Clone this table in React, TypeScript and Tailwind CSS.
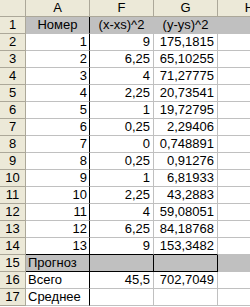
const cols = ["A", "F", "G", "H"];

type Row = { a: string; f?: string; g?: string; left?: boolean };

const rows: Row[] = [
  { a: "1", f: "9", g: "175,1815" },
  { a: "2", f: "6,25", g: "65,10255" },
  { a: "3", f: "4", g: "71,27775" },
  { a: "4", f: "2,25", g: "20,73541" },
  { a: "5", f: "1", g: "19,72795" },
  { a: "6", f: "0,25", g: "2,29406" },
  { a: "7", f: "0", g: "0,748891" },
  { a: "8", f: "0,25", g: "0,91276" },
  { a: "9", f: "1", g: "6,81933" },
  { a: "10", f: "2,25", g: "43,2883" },
  { a: "11", f: "4", g: "59,08051" },
  { a: "12", f: "6,25", g: "84,18768" },
  { a: "13", f: "9", g: "153,3482" },
];

function Cell({
  children,
  className = "",
}: {
  children?: React.ReactNode;
  className?: string;
}) {
  return (
    <div className={`h-[17px] border-b border-r border-[#c0c0c0] leading-[16px] overflow-hidden whitespace-nowrap ${className}`}>
      {children}
    </div>
  );
}

function RowHead({ n }: { n: number }) {
  return (
    <div className="h-[17px] border-b border-r border-[#aca899] bg-[#ece9d8] text-center leading-[16px]">
      {n}
    </div>
  );
}

export default function App() {
  return (
    <div
      className="w-[250px] h-[307px] overflow-hidden bg-white text-black text-[13px]"
      style={{ fontFamily: '"Liberation Sans", Arial, sans-serif' }}
    >
      <div className="grid grid-cols-[26px_64px_64px_64px_64px]">
        {/* column headers */}
        <div className="h-[17px] border-b border-r border-[#aca899] bg-[#ece9d8]" />
        {cols.map((c) => (
          <div
            key={c}
            className="h-[17px] border-b border-r border-[#aca899] bg-[#ece9d8] text-center leading-[16px]"
          >
            {c}
          </div>
        ))}

        {/* row 1 headers */}
        <RowHead n={1} />
        <Cell className="bg-[#c0c0c0] text-center border-r-black">Номер</Cell>
        <Cell className="bg-[#c0c0c0] text-center">(x-xs)^2</Cell>
        <Cell className="bg-[#c0c0c0] text-center">(y-ys)^2</Cell>
        <Cell className="bg-[#c0c0c0]" />

        {rows.map((r, i) => {
          const last = i === rows.length - 1;
          const b = last ? "border-b-black" : "";
          return [
            <RowHead key={`h${i}`} n={i + 2} />,
            <Cell key={`a${i}`} className={`text-right pr-[2px] border-r-black ${b}`}>{r.a}</Cell>,
            <Cell key={`f${i}`} className={`text-right pr-[3px] ${b}`}>{r.f}</Cell>,
            <Cell key={`g${i}`} className={`text-right pr-[3px] ${b}`}>{r.g}</Cell>,
            <Cell key={`x${i}`} />,
          ];
        })}

        {/* row 15 */}
        <RowHead n={15} />
        <Cell className="bg-[#c0c0c0] pl-[2px] border-r-black border-b-black">Прогноз</Cell>
        <Cell className="bg-[#c0c0c0] border-r-black border-b-black" />
        <Cell className="bg-[#c0c0c0] border-r-black border-b-black" />
        <Cell className="bg-[#c0c0c0]" />

        {/* row 16 */}
        <RowHead n={16} />
        <Cell className="pl-[2px] border-r-black">Всего</Cell>
        <Cell className="text-right pr-[3px]">45,5</Cell>
        <Cell className="text-right pr-[3px]">702,7049</Cell>
        <Cell />

        {/* row 17 */}
        <RowHead n={17} />
        <Cell className="pl-[2px] border-r-black">Среднее</Cell>
        <Cell />
        <Cell />
        <Cell />
      </div>
    </div>
  );
}
